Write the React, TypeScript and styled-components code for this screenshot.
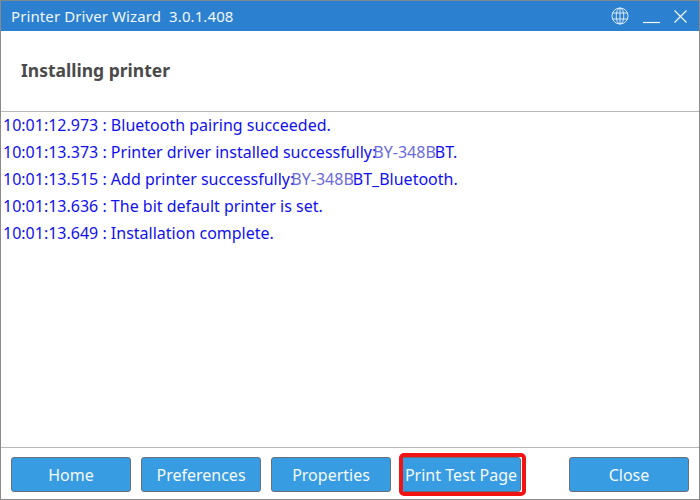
import React from "react";
import styled, { createGlobalStyle } from "styled-components";

const GlobalStyle = createGlobalStyle`
  html, body {
    margin: 0;
    padding: 0;
    background: #fff;
  }
`;

const LOG_LINES: { time: string; parts: { text: string; faded?: boolean }[] }[] = [
  { time: "10:01:12.973", parts: [{ text: "Bluetooth pairing succeeded." }] },
  {
    time: "10:01:13.373",
    parts: [
      { text: "Printer driver installed successfully:" },
      { text: "BY-348B", faded: true },
      { text: "BT." },
    ],
  },
  {
    time: "10:01:13.515",
    parts: [
      { text: "Add printer successfully:" },
      { text: "BY-348B", faded: true },
      { text: "BT_Bluetooth." },
    ],
  },
  { time: "10:01:13.636", parts: [{ text: "The bit default printer is set." }] },
  { time: "10:01:13.649", parts: [{ text: "Installation complete." }] },
];

const Window = styled.div`
  width: 700px;
  height: 500px;
  box-sizing: border-box;
  display: flex;
  flex-direction: column;
  border-left: 1px solid #8a8a8a;
  border-right: 1px solid #8a8a8a;
  border-bottom: 1px solid #8a8a8a;
  border-top: 1px solid #7d8790;
  font-family: "Noto Sans", "Open Sans", sans-serif;
  background: #fff;
  overflow: hidden;
`;

const TitleBar = styled.div`
  height: 30px;
  flex: none;
  display: flex;
  align-items: center;
  background: #2b80d0;
  color: #f2f7fc;
  font-size: 15px;
  padding-left: 10px;
`;

const Title = styled.span`
  flex: 1;
  white-space: pre;
  letter-spacing: 0.1px;
`;

const WindowControls = styled.div`
  display: flex;
  align-items: center;
  gap: 14px;
  padding-right: 12px;
`;

const Header = styled.div`
  height: 81px;
  flex: none;
  box-sizing: border-box;
  display: flex;
  align-items: center;
  padding: 0 0 2px 20px;
  border-bottom: 1px solid #b8b8b8;
`;

const Heading = styled.h1`
  margin: 0;
  font-size: 17.5px;
  font-weight: 700;
  color: #4a4a4a;
`;

const Log = styled.div`
  flex: 1;
  padding: 0 0 0 3px;
`;

const LogLine = styled.div`
  height: 27px;
  line-height: 27px;
  font-size: 16px;
  color: #1010f0;
  white-space: pre;
  margin-left: -1px;
`;

const Faded = styled.span`
  color: #6a6adc;
  margin: 0 -1px 0 -3px;
`;

const Footer = styled.div`
  height: 52px;
  flex: none;
  box-sizing: border-box;
  display: flex;
  align-items: flex-start;
  gap: 10px;
  padding: 9px 10px 0 10px;
  border-top: 1px solid #b8b8b8;
`;

const Button = styled.button<{ $push?: boolean }>`
  position: relative;
  width: 120px;
  height: 35px;
  box-sizing: border-box;
  padding: 0;
  background: #389ce2;
  border: 1px solid #66707a;
  border-radius: 3px;
  color: #f4f9fd;
  font-family: inherit;
  font-size: 16px;
  white-space: nowrap;
  margin-left: ${(p) => (p.$push ? "38px" : "0")};
`;

const Highlight = styled.span`
  position: absolute;
  top: -5px;
  left: -3px;
  right: -6px;
  bottom: -5px;
  border: 4px solid #f01414;
  border-radius: 5px;
`;

function GlobeIcon() {
  return (
    <svg width="18" height="18" viewBox="0 0 18 18" fill="none" stroke="#dcebf8" strokeWidth="1">
      <circle cx="9" cy="9" r="8" />
      <ellipse cx="9" cy="9" rx="3.8" ry="8" />
      <path d="M9 1v16M1.6 6h14.8M1.6 12h14.8" />
    </svg>
  );
}

function MinimizeIcon() {
  return (
    <svg width="17" height="18" viewBox="0 0 17 18" fill="none" stroke="#f2f7fc" strokeWidth="1.2">
      <path d="M0 15.5h17" />
    </svg>
  );
}

function CloseIcon() {
  return (
    <svg width="13" height="13" viewBox="0 0 13 13" fill="none" stroke="#f2f7fc" strokeWidth="1.2">
      <path d="M.5.5l12 12M12.5.5l-12 12" />
    </svg>
  );
}

export default function App() {
  return (
    <>
      <GlobalStyle />
      <Window>
        <TitleBar>
          <Title>Printer Driver Wizard  3.0.1.408</Title>
          <WindowControls>
            <GlobeIcon />
            <MinimizeIcon />
            <CloseIcon />
          </WindowControls>
        </TitleBar>
        <Header>
          <Heading>Installing printer</Heading>
        </Header>
        <Log>
          {LOG_LINES.map((line) => (
            <LogLine key={line.time}>
              {line.time} :{" "}
              {line.parts.map((part, i) =>
                part.faded ? <Faded key={i}>{part.text}</Faded> : <span key={i}>{part.text}</span>,
              )}
            </LogLine>
          ))}
        </Log>
        <Footer>
          <Button>Home</Button>
          <Button>Preferences</Button>
          <Button>Properties</Button>
          <Button>
            Print Test Page
            <Highlight />
          </Button>
          <Button $push>Close</Button>
        </Footer>
      </Window>
    </>
  );
}
